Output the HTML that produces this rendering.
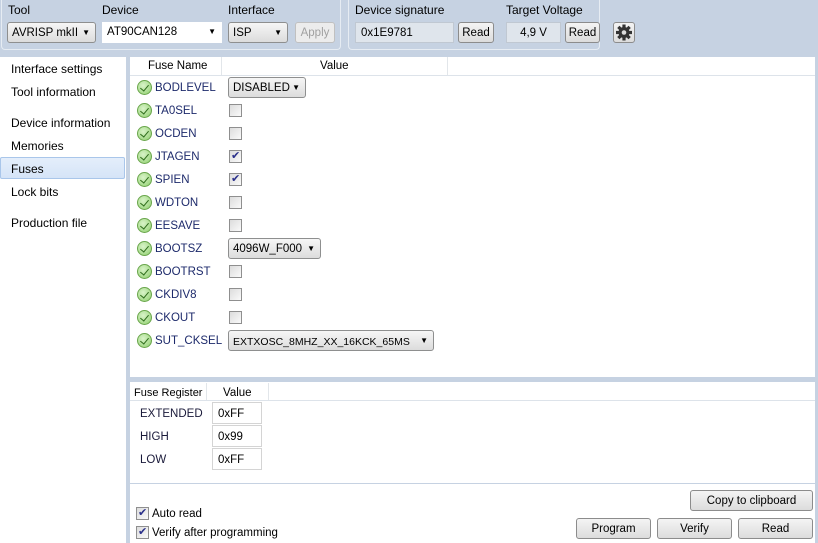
<!DOCTYPE html>
<html><head><style>
*{box-sizing:border-box;margin:0;padding:0}
body{width:818px;height:543px;overflow:hidden;background:#fff;font-family:"Liberation Sans",sans-serif;font-size:11.5px;color:#000;position:relative}
.abs{position:absolute}
.hdr{left:0;top:0;width:818px;height:57px;background:#c6d2e2}
.grp{border:1px solid #e6ecf3;border-top:none;border-radius:0 0 4px 4px}
.lbl{font-size:12px}
.combo{background:linear-gradient(#f6f6f6,#dcdcdc);border:1px solid #8e8f8f;border-radius:3px;height:21px;padding:4px 4px;font-size:11.5px;white-space:nowrap}
.combo:after{content:"▼";position:absolute;right:5px;top:5px;font-size:8px}
.btn{background:linear-gradient(#f4f4f4,#dcdcdc);border:1px solid #8c8c8c;border-radius:3px;height:21px;text-align:center;padding-top:4px;font-size:11.5px}
.tb{background:#dfe5ec;border:1px solid #c0c8d2;height:21px;padding:4px 5px;font-size:11.5px}
.nav{left:11px;font-size:12px}
.fn{left:155px;color:#1d2a6b;font-size:11.5px}
.ok{left:137px;width:15px;height:15px;border-radius:50%;background:radial-gradient(circle at 40% 35%,#d8f3c8,#8fcf6e);border:1px solid #6aa64c}
.ok:after{content:"";position:absolute;left:4px;top:2px;width:4px;height:7px;border:solid #2d6b1a;border-width:0 1.5px 1.5px 0;transform:rotate(40deg)}
.cb{left:229px;width:13px;height:13px;border:1px solid #8f8f8f;background:linear-gradient(135deg,#dcdcdc,#fafafa)}
.cb.c:after{content:"✔";position:absolute;left:1px;top:-2px;font-size:11px;color:#2a2f8a}
.reg{left:140px;color:#1a1a3a;font-size:11.5px}
.rv{left:212px;width:50px;height:22px;border:1px solid #d4d4d4;padding:5px 5px;font-size:11.5px}
</style></head><body>
<div class="abs hdr"></div>
<div class="abs grp" style="left:1px;top:0;width:340px;height:50px"></div>
<div class="abs grp" style="left:348px;top:0;width:252px;height:50px"></div>
<div class="abs lbl" style="left:8px;top:3px">Tool</div>
<div class="abs lbl" style="left:102px;top:3px">Device</div>
<div class="abs lbl" style="left:228px;top:3px">Interface</div>
<div class="abs combo" style="left:7px;top:22px;width:89px">AVRISP mkII</div>
<div class="abs" style="left:102px;top:22px;width:120px;height:21px;background:#fff;padding:4px 5px">AT90CAN128<span style="position:absolute;right:6px;top:5px;font-size:8px">▼</span></div>
<div class="abs combo" style="left:228px;top:22px;width:60px">ISP</div>
<div class="abs btn" style="left:295px;top:22px;width:40px;color:#a0a0a0;border-color:#c0c0c0;background:#ececec">Apply</div>
<div class="abs lbl" style="left:355px;top:3px">Device signature</div>
<div class="abs lbl" style="left:506px;top:3px">Target Voltage</div>
<div class="abs tb" style="left:355px;top:22px;width:99px">0x1E9781</div>
<div class="abs btn" style="left:458px;top:22px;width:36px">Read</div>
<div class="abs tb" style="left:506px;top:22px;width:55px;text-align:center">4,9 V</div>
<div class="abs btn" style="left:565px;top:22px;width:35px">Read</div>
<div class="abs btn" style="left:613px;top:22px;width:22px;padding:0"><svg width="20" height="19" viewBox="0 0 20 19"><g transform="translate(10,9.5)" fill="#333"><circle r="5.5"/><rect x="-1.6" y="-8" width="3.2" height="16"/><rect x="-1.6" y="-8" width="3.2" height="16" transform="rotate(45)"/><rect x="-1.6" y="-8" width="3.2" height="16" transform="rotate(90)"/><rect x="-1.6" y="-8" width="3.2" height="16" transform="rotate(135)"/><circle r="2.3" fill="#ddd"/></g></svg></div>

<div class="abs" style="left:126px;top:57px;width:4px;height:486px;background:#c6d2e2"></div>
<div class="abs nav" style="top:62px">Interface settings</div>
<div class="abs nav" style="top:85px">Tool information</div>
<div class="abs nav" style="top:116px">Device information</div>
<div class="abs nav" style="top:139px">Memories</div>
<div class="abs" style="left:0;top:157px;width:125px;height:22px;background:linear-gradient(#e4eefb,#d5e4f7);border:1px solid #a9c6ea;border-radius:2px"></div>
<div class="abs nav" style="top:162px">Fuses</div>
<div class="abs nav" style="top:185px">Lock bits</div>
<div class="abs nav" style="top:216px">Production file</div>

<div class="abs" style="left:130px;top:57px;width:688px;height:19px;border-bottom:1px solid #dde3ea;background:#fff"></div>
<div class="abs" style="left:221px;top:57px;width:1px;height:18px;background:#e2e6ea"></div>
<div class="abs" style="left:447px;top:57px;width:1px;height:18px;background:#e2e6ea"></div>
<div class="abs" style="left:148px;top:60px">Fuse Name</div>
<div class="abs" style="left:320px;top:60px">Value</div>

<div class="abs ok" style="top:80px"></div><div class="abs fn" style="top:82px">BODLEVEL</div>
<div class="abs combo" style="left:228px;top:77px;width:78px">DISABLED</div>
<div class="abs ok" style="top:103px"></div><div class="abs fn" style="top:105px">TA0SEL</div><div class="abs cb" style="top:104px"></div>
<div class="abs ok" style="top:126px"></div><div class="abs fn" style="top:128px">OCDEN</div><div class="abs cb" style="top:127px"></div>
<div class="abs ok" style="top:149px"></div><div class="abs fn" style="top:151px">JTAGEN</div><div class="abs cb c" style="top:150px"></div>
<div class="abs ok" style="top:172px"></div><div class="abs fn" style="top:174px">SPIEN</div><div class="abs cb c" style="top:173px"></div>
<div class="abs ok" style="top:195px"></div><div class="abs fn" style="top:197px">WDTON</div><div class="abs cb" style="top:196px"></div>
<div class="abs ok" style="top:218px"></div><div class="abs fn" style="top:220px">EESAVE</div><div class="abs cb" style="top:219px"></div>
<div class="abs ok" style="top:241px"></div><div class="abs fn" style="top:243px">BOOTSZ</div>
<div class="abs combo" style="left:228px;top:238px;width:93px">4096W_F000</div>
<div class="abs ok" style="top:264px"></div><div class="abs fn" style="top:266px">BOOTRST</div><div class="abs cb" style="top:265px"></div>
<div class="abs ok" style="top:287px"></div><div class="abs fn" style="top:289px">CKDIV8</div><div class="abs cb" style="top:288px"></div>
<div class="abs ok" style="top:310px"></div><div class="abs fn" style="top:312px">CKOUT</div><div class="abs cb" style="top:311px"></div>
<div class="abs ok" style="top:333px"></div><div class="abs fn" style="top:335px">SUT_CKSEL</div>
<div class="abs combo" style="left:228px;top:330px;width:206px;font-size:10.5px;padding-top:5px">EXTXOSC_8MHZ_XX_16KCK_65MS</div>

<div class="abs" style="left:130px;top:377px;width:688px;height:5px;background:#c6d2e2"></div>
<div class="abs" style="left:130px;top:383px;width:688px;height:18px;border-bottom:1px solid #dde3ea"></div>
<div class="abs" style="left:206px;top:383px;width:1px;height:17px;background:#e2e6ea"></div>
<div class="abs" style="left:268px;top:383px;width:1px;height:17px;background:#e2e6ea"></div>
<div class="abs" style="left:134px;top:387px;font-size:11px">Fuse Register</div>
<div class="abs" style="left:223px;top:387px">Value</div>
<div class="abs reg" style="top:408px">EXTENDED</div><div class="abs rv" style="top:402px">0xFF</div>
<div class="abs reg" style="top:431px">HIGH</div><div class="abs rv" style="top:425px">0x99</div>
<div class="abs reg" style="top:454px">LOW</div><div class="abs rv" style="top:448px">0xFF</div>
<div class="abs" style="left:130px;top:483px;width:688px;height:1px;background:#c6d2e2"></div>

<div class="abs cb c" style="left:136px;top:507px"></div><div class="abs" style="left:152px;top:508px">Auto read</div>
<div class="abs cb c" style="left:136px;top:526px"></div><div class="abs" style="left:152px;top:527px">Verify after programming</div>
<div class="abs btn" style="left:690px;top:490px;width:123px">Copy to clipboard</div>
<div class="abs btn" style="left:576px;top:518px;width:75px">Program</div>
<div class="abs btn" style="left:657px;top:518px;width:75px">Verify</div>
<div class="abs btn" style="left:738px;top:518px;width:75px">Read</div>
<div class="abs" style="left:815px;top:57px;width:3px;height:486px;background:#c6d2e2"></div>
</body></html>
